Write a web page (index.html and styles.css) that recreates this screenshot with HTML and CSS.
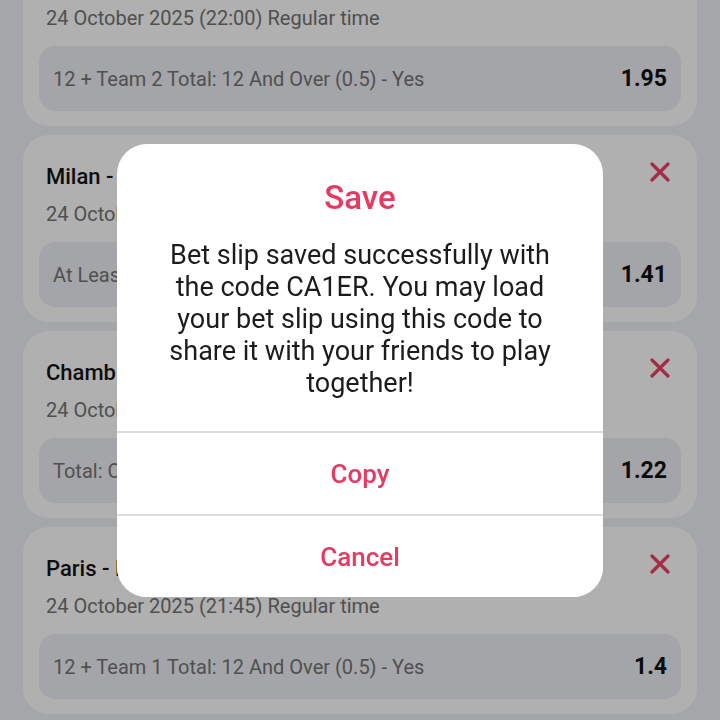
FILE: index.html
```html
<!DOCTYPE html>
<html lang="en">
<head>
  <meta charset="UTF-8">
  <title>Bet slip</title>
  <link rel="stylesheet" href="styles.css">
</head>
<body>
  <main class="slip">
    <div class="event">
      <div class="event-head">
        <span class="event-title">Lyon - Brest</span>
        <span class="remove"><svg viewBox="0 0 20 20"><path d="M2 2L18 18M18 2L2 18"/></svg></span>
      </div>
      <div class="event-date">24 October 2025 (22:00) Regular time</div>
      <div class="bet">
        <span class="bet-name">12 + Team 2 Total: 12 And Over (0.5) - Yes</span>
        <span class="bet-odd">1.95</span>
      </div>
    </div>

    <div class="event">
      <div class="event-head">
        <span class="event-title">Milan - Pisa</span>
        <span class="remove"><svg viewBox="0 0 20 20"><path d="M2 2L18 18M18 2L2 18"/></svg></span>
      </div>
      <div class="event-date">24 October 2025 (20:45) Regular time</div>
      <div class="bet">
        <span class="bet-name">At Least One Team Will Not Score - Yes</span>
        <span class="bet-odd">1.41</span>
      </div>
    </div>

    <div class="event">
      <div class="event-head">
        <span class="event-title">Chambly - Sochaux</span>
        <span class="remove"><svg viewBox="0 0 20 20"><path d="M2 2L18 18M18 2L2 18"/></svg></span>
      </div>
      <div class="event-date">24 October 2025 (20:30) Regular time</div>
      <div class="bet">
        <span class="bet-name">Total: Over (1.5)</span>
        <span class="bet-odd">1.22</span>
      </div>
    </div>

    <div class="event">
      <div class="event-head">
        <span class="event-title">Paris - Lens</span>
        <span class="remove"><svg viewBox="0 0 20 20"><path d="M2 2L18 18M18 2L2 18"/></svg></span>
      </div>
      <div class="event-date">24 October 2025 (21:45) Regular time</div>
      <div class="bet">
        <span class="bet-name">12 + Team 1 Total: 12 And Over (0.5) - Yes</span>
        <span class="bet-odd">1.4</span>
      </div>
    </div>
  </main>

  <div class="overlay">
    <div class="dialog">
      <h2 class="dialog-title">Save</h2>
      <p class="dialog-text">Bet slip saved successfully with the code CA1ER. You may load your bet slip using this code to share it with your friends to play together!</p>
      <button type="button" class="dialog-btn">Copy</button>
      <button type="button" class="dialog-btn">Cancel</button>
    </div>
  </div>
</body>
</html>
```

FILE: styles.css
```css
body {
  margin: 0;
  font-family: Roboto, "Noto Sans", sans-serif;
  background-color: #eff1f6;
  height: 720px;
  overflow: hidden;
}
.slip {
  display: flex;
  flex-direction: column;
  gap: 9px;
  padding: 0 23px;
  margin-top: -61px;
}
.event {
  background: #fff;
  border-radius: 26px;
  padding: 26px 16px 15px;
}
.event-head {
  display: flex;
  justify-content: space-between;
  align-items: center;
  height: 30px;
  padding-left: 7px;
}
.event-title {
  font-size: 22px;
  font-weight: 500;
  color: #141414;
}
.remove {
  width: 20px;
  height: 20px;
  margin-right: 11px;
  margin-top: -8px;
}
.remove svg {
  display: block;
  width: 20px;
  height: 20px;
  stroke: #ee3f68;
  stroke-width: 3.2;
  stroke-linecap: round;
  fill: none;
}
.event-date {
  margin-top: 11px;
  padding-left: 7px;
  font-size: 20px;
  line-height: 24px;
  color: #747474;
}
.bet {
  display: flex;
  justify-content: space-between;
  align-items: center;
  margin-top: 16px;
  height: 65px;
  padding: 0 14px;
  background: #eef0f4;
  border-radius: 16px;
}
.bet-name {
  font-size: 20px;
  color: #747474;
}
.bet-odd {
  font-size: 23px;
  font-weight: 700;
  color: #111;
}
.overlay {
  position: fixed;
  inset: 0;
  background: rgba(0, 0, 0, 0.31);
  display: flex;
  justify-content: center;
  align-items: flex-start;
  padding-top: 144px;
}
.dialog {
  width: 486px;
  background: #fff;
  border-radius: 30px;
  overflow: hidden;
  text-align: center;
}
.dialog-title {
  margin: 34px 0 0;
  font-size: 33px;
  line-height: 40px;
  font-weight: 500;
  color: #e53a62;
}
.dialog-text {
  margin: 21px 0 0;
  padding: 0 43px 32px;
  font-size: 27px;
  line-height: 32px;
  color: #1c1c1c;
}
.dialog-btn {
  display: block;
  width: 100%;
  height: 83px;
  border: none;
  border-top: 2px solid #dcdcdc;
  background: #fff;
  font-family: Roboto, "Noto Sans", sans-serif;
  font-size: 26px;
  font-weight: 500;
  color: #e53a62;
  padding: 0;
}
```
